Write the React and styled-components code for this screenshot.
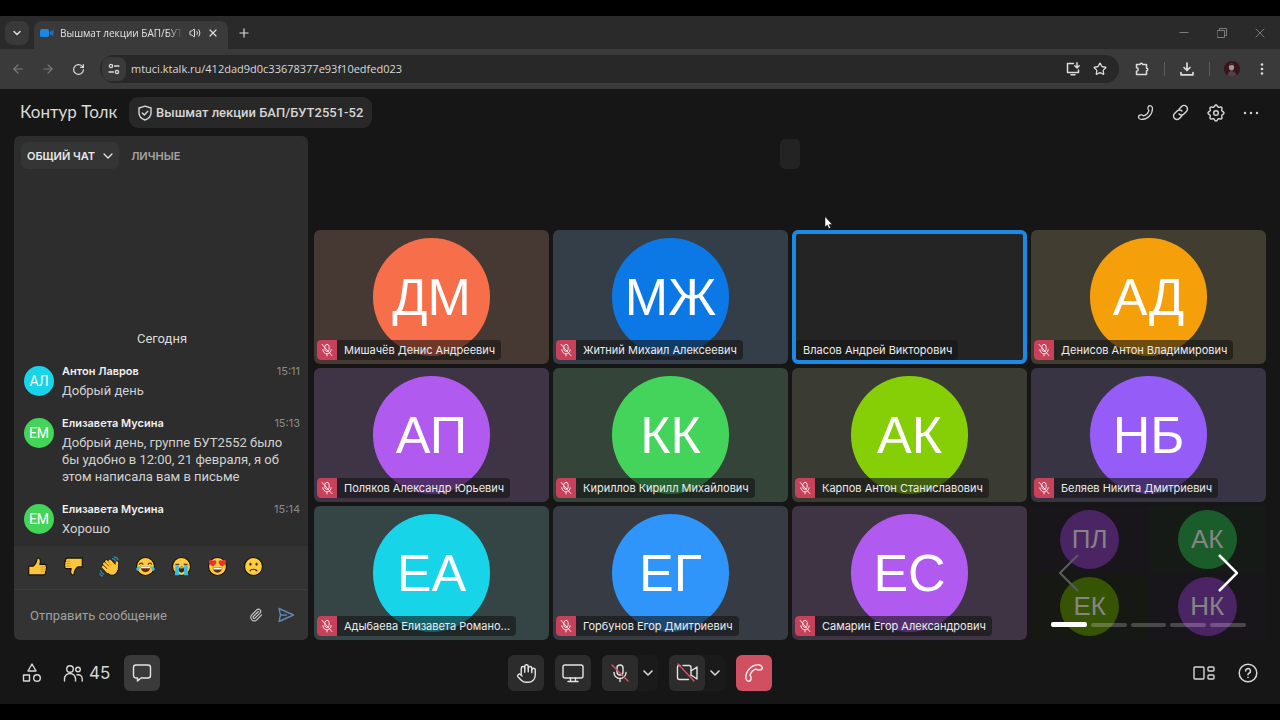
import React from 'react'
import styled, { createGlobalStyle, css } from 'styled-components'
import { Volume2, X, Plus, ChevronDown, ArrowLeft, ArrowRight, RotateCw, Star, Paperclip, Hand } from 'lucide-react'

// Data
const people = [
  { initials: 'ДМ', name: 'Мишачёв Денис Андреевич', color: '#f76f4a', bg: '#463832' },
  { initials: 'МЖ', name: 'Житний Михаил Алексеевич', color: '#0b78e6', bg: '#343e48' },
  { name: 'Власов Андрей Викторович', bg: '#242424', speaking: true },
  { initials: 'АД', name: 'Денисов Антон Владимирович', color: '#f59f0b', bg: '#413e31' },
  { initials: 'АП', name: 'Поляков Александр Юрьевич', color: '#b15af0', bg: '#3e3446' },
  { initials: 'КК', name: 'Кириллов Кирилл Михайлович', color: '#44d45c', bg: '#344438' },
  { initials: 'АК', name: 'Карпов Антон Станиславович', color: '#86cf06', bg: '#3a3b33' },
  { initials: 'НБ', name: 'Беляев Никита Дмитриевич', color: '#955cf8', bg: '#383444' },
  { initials: 'ЕА', name: 'Адыбаева Елизавета Романо...', color: '#17d4e8', bg: '#354444' },
  { initials: 'ЕГ', name: 'Горбунов Егор Дмитриевич', color: '#2f95fa', bg: '#363b44' },
  { initials: 'ЕС', name: 'Самарин Егор Александрович', color: '#b15af0', bg: '#3e3444' }
]

const nextPeople = [
  { initials: 'ПЛ', color: '#4b2464', bg: '#18151b' },
  { initials: 'АК', color: '#1b5c2b', bg: '#151a16' },
  { initials: 'ЕК', color: '#375404', bg: '#161814' },
  { initials: 'НК', color: '#4b2464', bg: '#18151b' }
]

const messages = [
  { initials: 'АЛ', color: '#17d4e8', author: 'Антон Лавров', time: '15:11', lines: ['Добрый день'] },
  {
    initials: 'ЕМ', color: '#42d55a', author: 'Елизавета Мусина', time: '15:13',
    lines: ['Добрый день, группе БУТ2552 было', 'бы удобно в 12:00, 21 февраля, я об', 'этом написала вам в письме']
  },
  { initials: 'ЕМ', color: '#42d55a', author: 'Елизавета Мусина', time: '15:14', lines: ['Хорошо'] }
]

// Styles
const GlobalStyle = createGlobalStyle`
  * { box-sizing: border-box; }
  body {
    margin: 0;
    background: #000;
    color: #e6e6e6;
    font-family: Inter, "Liberation Sans", sans-serif;
  }
  button, input { font-family: inherit; color: inherit; }
  button { margin: 0; padding: 0; border: 0; background: none; }
  svg { display: block; flex: none; }
`

const Page = styled.div`
  display: flex;
  flex-direction: column;
  min-height: 100vh;
  padding: 16px 0;
`

const TabStrip = styled.div`
  display: flex;
  align-items: flex-end;
  height: 33px;
  padding-left: 4px;
  background: #2a2a2a;
`

const ChromeButton = styled.button`
  display: flex;
  flex: none;
  align-items: center;
  justify-content: center;
  width: ${p => p.$w || 24}px;
  height: 24px;
  border-radius: 8px;
  background: ${p => p.$bg || 'transparent'};
  color: ${p => p.$color || '#dcdcdc'};
`

const TabSearch = styled.div`
  padding: 0 5px 4px 1px;
`

const Tab = styled.div`
  display: flex;
  align-items: center;
  width: 194px;
  height: 28px;
  padding: 0 3px 4px 6px;
  border-radius: 8px 8px 0 0;
  background: #3a3a3a;
`

const TabTitle = styled.span`
  flex: 1;
  min-width: 0;
  margin: 0 6px;
  white-space: nowrap;
  font: 10px/16px "Open Sans", sans-serif;
  color: #e4e4e4;
  mask-image: linear-gradient(90deg, #000 88%, transparent);
`

const NewTab = styled.div`
  padding: 0 0 4px 4px;
`

const WindowControls = styled.div`
  display: flex;
  align-self: center;
  gap: 14px;
  margin-left: auto;
  padding-right: 8px;
`

const AddressBar = styled.div`
  display: flex;
  align-items: center;
  height: 40px;
  padding: 0 10px 0 6px;
  background: #3a3a3a;
`

const NavButtons = styled.div`
  display: flex;
  gap: 6px;
  padding-right: 10px;
`

const UrlBox = styled.div`
  display: flex;
  flex: 1;
  align-items: center;
  height: 28px;
  padding: 0 6px 0 2px;
  border-radius: 14px;
  background: #282828;
`

const UrlInput = styled.input`
  flex: 1;
  min-width: 0;
  margin-left: 3px;
  border: 0;
  outline: 0;
  background: none;
  color: #d8d8d8;
  font: 11px/20px "Open Sans", sans-serif;
`

const Tools = styled.div`
  display: flex;
  align-items: center;
  gap: 10px;
  padding-left: 11px;
`

const Divider = styled.span`
  width: 1px;
  height: 14px;
  background: #5c5c5c;
`

const AppBody = styled.div`
  display: flex;
  flex: 1;
  flex-direction: column;
  background: #161616;
`

const Header = styled.header`
  display: flex;
  align-items: center;
  height: 47px;
  padding: 0 12px 0 20px;
`

const Logo = styled.div`
  width: 109px;
  padding-bottom: 2px;
  color: #dadada;
  font-family: Lato, sans-serif;
  font-size: 17px;
  line-height: 24px;
`

const RoomName = styled.button`
  display: flex;
  align-items: center;
  gap: 3px;
  height: 31px;
  padding: 0 9px 0 8px;
  border-radius: 9px;
  background: #282828;
  color: #d6d6d6;
  font-family: Roboto, sans-serif;
  font-size: 13px;
  font-weight: 500;
`

const HeaderActions = styled.div`
  display: flex;
  margin-left: auto;
`

const HeaderButton = styled.button`
  display: flex;
  align-items: center;
  justify-content: center;
  width: 35px;
  height: 32px;
  color: #d4d4d4;
`

const Main = styled.main`
  display: grid;
  flex: 1;
  grid-template-columns: 294px 1fr;
  gap: 6px;
  padding: 0 14px;
`

const Chat = styled.section`
  display: flex;
  flex-direction: column;
  overflow: hidden;
  border-radius: 6px;
  background: #2d2d2d;
`

const ChatTabs = styled.div`
  display: flex;
  gap: 6px;
  padding: 6px 7px;
`

const ChatTab = styled.button`
  display: flex;
  align-items: center;
  gap: 8px;
  height: 27px;
  padding: 0 6px;
  border-radius: 7px;
  color: #a4a4a4;
  font-size: 11px;
  font-weight: 600;
  ${p => p.$active && css`
    background: #353535;
    color: #e8e8e8;
  `}
`

const MessageList = styled.div`
  display: flex;
  flex: 1;
  flex-direction: column;
  justify-content: flex-end;
  gap: 15px;
  padding: 0 8px 9px 10px;
`

const DayLabel = styled.div`
  color: #dcdcdc;
  font-family: Roboto, sans-serif;
  font-size: 13px;
  line-height: 17px;
  text-align: center;
`

const Message = styled.article`
  display: grid;
  grid-template-columns: 30px 1fr;
  gap: 8px;
`

const MessageHead = styled.div`
  display: flex;
  justify-content: space-between;
  margin-bottom: 2px;
  font-size: 11px;
  line-height: 18px;
`

const Author = styled.span`
  color: #f0f0f0;
  font-weight: 600;
`

const Time = styled.time`
  color: #8c8c8c;
`

const MessageLine = styled.div`
  color: #d2d2d2;
  font-family: Roboto, sans-serif;
  font-size: 13px;
  line-height: 17px;
  white-space: nowrap;
`

const SmallAvatar = styled.div`
  display: flex;
  align-items: center;
  justify-content: center;
  width: 30px;
  height: 30px;
  margin-top: 4px;
  border-radius: 50%;
  background: ${p => p.$color};
  color: #fff;
  font-family: Roboto, sans-serif;
  font-size: 14px;
`

const Emojis = styled.div`
  display: flex;
  gap: 12px;
  height: 44px;
  padding: 0 12px 2px 11px;
  border-bottom: 1px solid #3c3c3c;
  background: #333;
`

const EmojiButton = styled.button`
  display: flex;
  align-items: center;
  justify-content: center;
  width: 24px;
`

const Composer = styled.form`
  display: flex;
  align-items: center;
  gap: 10px;
  height: 50px;
  padding: 0 12px 0 16px;
  background: #333;
`

const MessageInput = styled.input`
  flex: 1;
  min-width: 0;
  padding: 0;
  border: 0;
  outline: 0;
  background: none;
  font-family: Roboto, sans-serif;
  font-size: 13px;
  &::placeholder { color: #a0a0a0; opacity: 1; }
`

const PlainButton = styled.button`
  display: flex;
  align-items: center;
  justify-content: center;
  width: 20px;
  height: 24px;
  color: ${p => p.$color || '#c8c8c8'};
`

const Stage = styled.section`
  position: relative;
  display: flex;
  flex-direction: column;
  justify-content: flex-end;
`

const StageHandle = styled.div`
  width: 20px;
  height: 30px;
  margin: 3px auto auto;
  border-radius: 5px;
  background: #232323;
`

const Cursor = styled.svg`
  position: absolute;
  top: 80px;
  left: 510px;
`

const Tiles = styled.div`
  display: grid;
  grid-template-columns: repeat(4, 1fr);
  gap: 4px;
`

const Tile = styled.div`
  position: relative;
  display: flex;
  align-items: center;
  justify-content: center;
  aspect-ratio: 235 / 134;
  overflow: hidden;
  border: ${p => (p.$speaking ? '4px solid #1b8ae6' : '0')};
  border-radius: 6px;
  background: ${p => p.$bg};
`

const Avatar = styled.div`
  display: flex;
  align-items: center;
  justify-content: center;
  height: 88%;
  aspect-ratio: 1;
  border-radius: 50%;
  background: ${p => p.$color};
  color: ${p => (p.$small ? '#858585' : '#fff')};
  font-family: "Liberation Sans", sans-serif;
  font-size: ${p => (p.$small ? 26 : 52)}px;
`

const NameTag = styled.div`
  position: absolute;
  bottom: ${p => (p.$speaking ? 0 : 4)}px;
  left: ${p => (p.$speaking ? 0 : 3)}px;
  display: flex;
  overflow: hidden;
  height: 20px;
  border-radius: 4px;
  background: rgba(20, 20, 20, 0.6);
  color: #ececec;
  font-size: 11px;
  line-height: 20px;
  white-space: nowrap;
`

const Muted = styled.span`
  display: flex;
  align-items: center;
  justify-content: center;
  width: 20px;
  background: #c8415a;
`

const Name = styled.span`
  padding: 0 6px 0 7px;
`

const NextPage = styled.div`
  position: relative;
  display: grid;
  grid-template-columns: 1fr 1fr;
  grid-template-rows: 1fr 1fr;
`

const MiniTile = styled.div`
  display: flex;
  align-items: center;
  justify-content: center;
  min-height: 0;
  background: ${p => p.$bg};
`

const Pager = styled.div`
  position: absolute;
  inset: 0;
  display: flex;
  align-items: center;
  justify-content: space-between;
  padding: 0 28px;
`

const PageBars = styled.div`
  position: absolute;
  right: 20px;
  bottom: 13px;
  left: 20px;
  display: flex;
  align-items: center;
  gap: 4px;
`

const PageBar = styled.span`
  flex: 1;
  height: ${p => (p.$active ? 5 : 4)}px;
  border-radius: 2px;
  background: ${p => (p.$active ? '#fff' : 'rgba(255, 255, 255, 0.22)')};
`

const Footer = styled.footer`
  display: grid;
  grid-template-columns: 1fr auto 1fr;
  padding: 15px 16px 13px;
`

const FooterGroup = styled.div`
  display: flex;
  align-items: center;
  justify-content: ${p => p.$align || 'flex-start'};
  gap: ${p => p.$gap}px;
`

const FooterButton = styled.button`
  display: flex;
  align-items: center;
  justify-content: center;
  gap: 6px;
  min-width: 32px;
  height: 36px;
  color: #d8d8d8;
  font-size: 17px;
`

const CallButton = styled.button`
  display: flex;
  align-items: center;
  justify-content: center;
  width: 36px;
  height: 36px;
  border-radius: 6px;
  background: ${p => p.$bg || '#2c2c2c'};
  color: #e4e4e4;
`

const SplitButton = styled.div`
  display: flex;
  border-radius: 6px;
  background: #1a1a1a;
`

const MoreButton = styled.button`
  display: flex;
  align-items: center;
  justify-content: center;
  width: 20px;
  color: #d8d8d8;
`

// Icons
const Icon = ({ size = 20, box = 20, w = 1.4, children, ...props }) => (
  <svg width={size} height={size} viewBox={`0 0 ${box} ${box}`} fill="none" stroke="currentColor" strokeWidth={w} strokeLinecap="round" strokeLinejoin="round" aria-hidden="true" {...props}>
    {children}
  </svg>
)

const MicPaths = () => (
  <>
    <rect x="7" y="2" width="6" height="10" rx="3" />
    <path d="M4 9.5a6 6 0 0 0 12 0M10 15.500v3" />
  </>
)

const Handset = ({ up, size = 20 }) => (
  <Icon size={size} w={1.5}>
    <g transform={up ? 'rotate(180 10 10)' : undefined}>
      <path d="M1.800 14.500C2 7.500 7.500 2 14.500 1.800c1.500-.1 3.600 1.200 3.700 2.700.1 1.600-1.300 2.500-2.800 2.600-1.300.1-2.300-.2-3.100-1.100C9.500 6.800 6.800 9.500 6 12.300c.9.800 1.200 1.800 1.100 3.100-.1 1.500-1 2.900-2.600 2.800-1.500-.1-2.800-2.200-2.700-3.700Z" />
    </g>
  </Icon>
)

const Camera = () => (
  <svg width="14" height="10" viewBox="0 0 14 10" aria-hidden="true">
    <rect y="1" width="9" height="8" rx="1.500" fill="#1a87e0" />
    <path d="M9.800 4 13.500 1.500v7L9.800 6z" fill="#1a6fc0" />
  </svg>
)

const face = <circle cx="12" cy="12" r="10.300" fill="#fccb3f" stroke="#15120a" strokeWidth="1.300" />
const thumb = (
  <g stroke="#15120a" strokeWidth="1.300" strokeLinejoin="round" fill="#fcc53a">
    <path d="M2 11.500h5.200c2.300-1.800 4-4.800 4.300-9C13.800 1.600 15.300 3.500 15.300 6c0 1.400-.3 2.600-.7 3.500h5.200c2 0 2.500 1.300 2 2.600.9.700.8 2.100 0 2.800.6.900.3 2.200-.6 2.700.3 1.500-.5 4-2.400 4H2Z" />
    <path d="M15.500 12.500h5M15.500 15.200h5M15.500 18h4.500" stroke="#c98716" strokeWidth=".8" fill="none" />
  </g>
)

const waveHand = 'M4.500 12.500 10 18M6 8.800l7 6.700M8.500 6.200l7.500 7M12.500 5.500l5 5.500M20.500 7.500 20 15'
const wave = (
  <g strokeLinejoin="round" strokeLinecap="round" fill="none">
    <path d={waveHand} stroke="#15120a" strokeWidth="4.400" />
    <circle cx="15" cy="15.500" r="6.500" fill="#fcc53a" stroke="#15120a" strokeWidth="1.200" />
    <path d={waveHand} stroke="#fcc53a" strokeWidth="3" />
    <path d="m6.500 11.500 4 4M8.500 9l4 3.800M11 7.200l3.500 3.500" stroke="#c98716" strokeWidth=".6" />
    <path d="M15.500 3c1.800.2 3 1.200 3.500 2.800M17.500.9c2.200.3 3.700 1.600 4.200 3.500M1.900 17c.4 2 1.600 3.300 3.500 3.900M1.100 20.500c.6 1.200 1.500 2 2.900 2.500" stroke="#2c93b8" strokeWidth="1.400" />
  </g>
)

const emojis = [
  { label: 'Нравится', art: thumb },
  { label: 'Не нравится', art: <g transform="rotate(180 12 12)">{thumb}</g> },
  { label: 'Привет', art: wave },
  {
    label: 'Смешно',
    art: (
      <>
        {face}
        <path d="M5 9.500c.8-1.800 3-1.800 4 0M15 9.500c.8-1.800 3-1.800 4 0" fill="none" stroke="#5b3608" strokeWidth="1.300" strokeLinecap="round" />
        <path d="M6.500 12h11c0 4-2.500 6.500-5.500 6.500S6.500 16 6.500 12Z" fill="#6b2a12" />
        <path d="M7 12h10v2H7Z" fill="#fff" />
        <path d="M5.500 11.500C2.500 12 1 13.500 1.500 16c1 2 4.300 1 4-4.500ZM18.500 11.500c3 .5 4.500 2 4 4.500-1 2-4.300 1-4-4.500Z" fill="#2fc0f2" />
      </>
    )
  },
  {
    label: 'Плачу',
    art: (
      <>
        {face}
        <path d="M5 9.500h4.500M14.500 9.500H19" stroke="#5b3608" strokeWidth="1.300" />
        <path d="M5 10.500h4V22H4.500ZM15 10.500h4l.5 11.500H15Z" fill="#2fc0f2" />
        <ellipse cx="12" cy="15.500" rx="3" ry="3.500" fill="#4a1c0c" />
        <path d="M9.800 13.500h4.400" stroke="#fff" />
      </>
    )
  },
  {
    label: 'Восторг',
    art: (
      <>
        {face}
        <path d="M6.500 12C3 10 1.500 7.500 2.500 5.500s3.500-1.500 4.200 0c1.300-1.300 3.700-1 4 1 .4 2-1.500 4-4.200 5.500ZM17.500 12c3.500-2 5-4.500 4-6.500s-3.500-1.500-4.200 0c-1.300-1.300-3.700-1-4 1-.4 2 1.500 4 4.200 5.500Z" fill="#e8352c" />
        <path d="M6.500 13.500h11c-.3 3.500-2.500 5.500-5.500 5.500s-5.200-2-5.500-5.500Z" fill="#6b2a12" />
        <path d="M7.200 13.700h9.600v1.800H7.200Z" fill="#fff" />
      </>
    )
  },
  {
    label: 'Грустно',
    art: (
      <>
        {face}
        <ellipse cx="8.500" cy="9.500" rx="1.200" ry="1.700" fill="#4a2c08" />
        <ellipse cx="15.500" cy="9.500" rx="1.200" ry="1.700" fill="#4a2c08" />
        <path d="M8 17c1.600-2.400 6.400-2.400 8 0" fill="none" stroke="#4a2c08" strokeWidth="1.300" strokeLinecap="round" />
      </>
    )
  }
]

const gear = Array.from({ length: 65 }, (_, i) => {
  const a = (i / 64) * Math.PI * 2
  const r = 7.9 + Math.cos(a * 8)
  return `${i ? 'L' : 'M'}${(10 + r * Math.cos(a)).toFixed(2)} ${(10 + r * Math.sin(a)).toFixed(2)}`
}).join('')

// Components
const Browser = () => (
  <>
    <TabStrip>
      <TabSearch>
        <ChromeButton $bg="#393939" aria-label="Поиск вкладок"><ChevronDown size={12} strokeWidth={3} /></ChromeButton>
      </TabSearch>
      <Tab>
        <Camera />
        <TabTitle>Вышмат лекции БАП/БУТ2</TabTitle>
        <Volume2 size={12} />
        <ChromeButton aria-label="Закрыть вкладку"><X size={12} strokeWidth={2.5} /></ChromeButton>
      </Tab>
      <NewTab>
        <ChromeButton aria-label="Новая вкладка"><Plus size={14} /></ChromeButton>
      </NewTab>
      <WindowControls>
        <ChromeButton $color="#7c7c7c" aria-label="Свернуть"><Icon size={10} box={10} w={1}><path d="M1 4.500h8" /></Icon></ChromeButton>
        <ChromeButton $color="#7c7c7c" aria-label="Развернуть">
          <Icon size={10} box={10} w={1}><path d="M.5 2.500h7v7h-7zM2.500 2.500v-2h7v7h-2" /></Icon>
        </ChromeButton>
        <ChromeButton $color="#7c7c7c" aria-label="Закрыть"><Icon size={10} box={10} w={1}><path d="m1 1 8 8M9 1 1 9" /></Icon></ChromeButton>
      </WindowControls>
    </TabStrip>
    <AddressBar>
      <NavButtons>
        <ChromeButton $color="#7c7c7c" aria-label="Назад"><ArrowLeft size={14} /></ChromeButton>
        <ChromeButton $color="#7c7c7c" aria-label="Вперёд"><ArrowRight size={14} /></ChromeButton>
        <ChromeButton aria-label="Обновить"><RotateCw size={13} strokeWidth={2.2} /></ChromeButton>
      </NavButtons>
      <UrlBox>
        <ChromeButton $bg="#3a3a3a" aria-label="Сведения о сайте">
          <Icon size={12} box={12} w={1.3}>
            <circle cx="3" cy="3" r="1.600" /><path d="M6.500 3H11M1 9h4.500" /><circle cx="9" cy="9" r="1.600" />
          </Icon>
        </ChromeButton>
        <UrlInput aria-label="Адрес" defaultValue="mtuci.ktalk.ru/412dad9d0c33678377e93f10edfed023" />
        <ChromeButton $w={27} aria-label="Установить">
          <Icon size={14} box={14} w={1.5}>
            <path d="M7.500 1.500h-6v9h11V8M5 12.800h4M11 .8v5M8.800 3.800 11 6l2.200-2.200" />
          </Icon>
        </ChromeButton>
        <ChromeButton $w={27} aria-label="В закладки"><Star size={14} strokeWidth={2.2} /></ChromeButton>
      </UrlBox>
      <Tools>
        <ChromeButton aria-label="Расширения">
          <Icon size={14} box={14} w={1.5}><path d="M1.500 2.500H5a1.300 1.300 0 0 1 2.600 0h3.900v3.700a1.300 1.300 0 0 1 0 2.600v3.700h-10V9.200a1.700 1.700 0 0 0 0-3.400Z" /></Icon>
        </ChromeButton>
        <Divider />
        <ChromeButton aria-label="Загрузки">
          <Icon size={14} box={14} w={1.700}><path d="M7 1v7M4 5.500l3 3 3-3M1 10.500v2.300h12v-2.300" /></Icon>
        </ChromeButton>
        <Divider />
        <ChromeButton aria-label="Профиль">
          <svg width="16" height="16" viewBox="0 0 16 16" aria-hidden="true">
            <circle cx="8" cy="8" r="8" fill="#34161c" />
            <path d="M3.500 14.500c0-3 2-4.500 4-4.500s4.500 1.500 5 4.200A8 8 0 0 1 3.500 14.500Z" fill="#4c4444" />
            <ellipse cx="7.500" cy="6" rx="2.600" ry="3.500" fill="#b08f86" />
            <path d="M4.800 5c0-3.500 5.500-3.500 5.500 0-1-1.500-4-1.500-5.500 0Z" fill="#2b1b1b" />
          </svg>
        </ChromeButton>
        <ChromeButton $w={16} aria-label="Меню">
          <Icon size={14} box={14} w={0}><g fill="currentColor"><circle cx="7" cy="2.500" r="1.300" /><circle cx="7" cy="7" r="1.300" /><circle cx="7" cy="11.500" r="1.300" /></g></Icon>
        </ChromeButton>
      </Tools>
    </AddressBar>
  </>
)

const ChatPanel = () => (
  <Chat>
    <ChatTabs>
      <ChatTab $active>ОБЩИЙ ЧАТ <Icon size={10} box={10} w={1.200}><path d="m1 3 4 4 4-4" /></Icon></ChatTab>
      <ChatTab>ЛИЧНЫЕ</ChatTab>
    </ChatTabs>
    <MessageList>
      <DayLabel>Сегодня</DayLabel>
      {messages.map(m => (
        <Message key={m.time}>
          <SmallAvatar $color={m.color}>{m.initials}</SmallAvatar>
          <div>
            <MessageHead><Author>{m.author}</Author><Time>{m.time}</Time></MessageHead>
            {m.lines.map(line => <MessageLine key={line}>{line}</MessageLine>)}
          </div>
        </Message>
      ))}
    </MessageList>
    <Emojis>
      {emojis.map(e => (
        <EmojiButton key={e.label} aria-label={e.label}>
          <svg width="21" height="21" viewBox="0 0 24 24" aria-hidden="true">{e.art}</svg>
        </EmojiButton>
      ))}
    </Emojis>
    <Composer>
      <MessageInput placeholder="Отправить сообщение" aria-label="Сообщение" />
      <PlainButton type="button" aria-label="Прикрепить файл"><Paperclip size={14} /></PlainButton>
      <PlainButton type="button" $color="#5f86b0" aria-label="Отправить">
        <Icon size={18} box={18} w={1.400}><path d="M2 2.500 16.500 9 2 15.500 3.500 9ZM3.500 9h6" /></Icon>
      </PlainButton>
    </Composer>
  </Chat>
)

const SlashedMic = () => <Icon size={14}><MicPaths /><path d="m3 2 14 16" /></Icon>

const Participants = () => (
  <Tiles>
    {people.map(p => (
      <Tile key={p.name} $bg={p.bg} $speaking={p.speaking}>
        {p.initials && <Avatar $color={p.color}>{p.initials}</Avatar>}
        <NameTag $speaking={p.speaking}>
          {!p.speaking && <Muted><SlashedMic /></Muted>}
          <Name>{p.name}</Name>
        </NameTag>
      </Tile>
    ))}
    <NextPage>
      {nextPeople.map(p => (
        <MiniTile key={p.initials} $bg={p.bg}><Avatar $small $color={p.color}>{p.initials}</Avatar></MiniTile>
      ))}
      <Pager>
        <PlainButton $color="#5c5c5c" aria-label="Предыдущая страница">
          <svg width="20" height="38" viewBox="0 0 20 38" fill="none" stroke="currentColor" strokeWidth="2"><path d="M19 1 1 19l18 18" /></svg>
        </PlainButton>
        <PlainButton $color="#fff" aria-label="Следующая страница">
          <svg width="20" height="38" viewBox="0 0 20 38" fill="none" stroke="currentColor" strokeWidth="2.500"><path d="m1 1 18 18L1 37" /></svg>
        </PlainButton>
      </Pager>
      <PageBars>
        <PageBar $active /><PageBar /><PageBar /><PageBar /><PageBar />
      </PageBars>
    </NextPage>
  </Tiles>
)

const CallBar = () => (
  <Footer>
    <FooterGroup $gap={14}>
      <FooterButton aria-label="Приложения">
        <Icon><path d="m10 1 4 7H6ZM1.500 12h6v6h-6z" /><circle cx="15" cy="15" r="3.300" /></Icon>
      </FooterButton>
      <FooterButton aria-label="Участники">
        <Icon size={21} box={21}>
          <circle cx="8" cy="6" r="3.300" /><path d="M2.500 18v-2a5.500 5.500 0 0 1 11 0v2" />
          <circle cx="16" cy="6.500" r="2.300" /><path d="M15 11.800c3-.6 5.200 1.200 5.200 4V18" />
        </Icon>
        45
      </FooterButton>
      <CallButton $bg="#3a3a3a" aria-label="Чат">
        <Icon size={20}><path d="M4 2h12a2.500 2.500 0 0 1 2.500 2.500v8A2.500 2.500 0 0 1 16 15H9l-3.500 3v-3H4a2.500 2.500 0 0 1-2.500-2.500v-8A2.500 2.500 0 0 1 4 2Z" /></Icon>
      </CallButton>
    </FooterGroup>
    <FooterGroup $gap={11}>
      <CallButton aria-label="Поднять руку"><Hand size={21} strokeWidth={1.600} /></CallButton>
      <CallButton aria-label="Показать экран">
        <Icon size={22} box={22}><rect x="1" y="3" width="20" height="13" rx="2" /><path d="M8.500 16v3.500M13.500 16v3.500M6 19.500h10" /></Icon>
      </CallButton>
      <SplitButton>
        <CallButton aria-label="Включить микрофон"><Icon><MicPaths /><path d="m2 2 16 16" stroke="#d8506a" /></Icon></CallButton>
        <MoreButton aria-label="Выбрать микрофон"><Icon size={10} box={10} w={1.600}><path d="m1 3 4 4 4-4" /></Icon></MoreButton>
      </SplitButton>
      <SplitButton>
        <CallButton aria-label="Включить камеру">
          <Icon size={22} box={22}>
            <path d="M4 3.500H3A1.500 1.500 0 0 0 1.500 5v10.500A2 2 0 0 0 3.500 17.500h9M7 3.500h6a2 2 0 0 1 2 2v8M15 9l6-4v12l-6-4" />
            <path d="m2 2 16 17" stroke="#d8506a" />
          </Icon>
        </CallButton>
        <MoreButton aria-label="Выбрать камеру"><Icon size={10} box={10} w={1.600}><path d="m1 3 4 4 4-4" /></Icon></MoreButton>
      </SplitButton>
      <CallButton $bg="#d04f60" aria-label="Завершить звонок"><Handset /></CallButton>
    </FooterGroup>
    <FooterGroup $gap={12} $align="flex-end">
      <FooterButton aria-label="Раскладка">
        <Icon size={22} box={22}><rect x="1" y="5" width="10" height="12" rx="1" /><rect x="15" y="5" width="6" height="4" rx="1" /><rect x="15" y="13" width="6" height="4" rx="1" /></Icon>
      </FooterButton>
      <FooterButton aria-label="Справка">
        <Icon w={1.500}><circle cx="10" cy="10" r="8.800" /><path d="M7.600 8a2.400 2.400 0 1 1 3.400 2.200c-.7.300-1 .8-1 1.500M10 14.300v.2" /></Icon>
      </FooterButton>
    </FooterGroup>
  </Footer>
)

const App = () => (
  <Page>
    <GlobalStyle />
    <Browser />
    <AppBody>
      <Header>
        <Logo>Контур Толк</Logo>
        <RoomName>
          <Icon size={16} box={16}><path d="M8 1.200 14 3v5c0 3.500-2.500 5.700-6 7-3.500-1.300-6-3.500-6-7V3ZM5.300 8l2 2 3.500-3.700" /></Icon>
          Вышмат лекции БАП/БУТ2551-52
        </RoomName>
        <HeaderActions>
          <HeaderButton aria-label="Позвонить"><Handset up size={17} /></HeaderButton>
          <HeaderButton aria-label="Скопировать ссылку">
            <Icon size={17} w={1.700}><path d="M8.300 11.700a4 4 0 0 0 5.700 0l3-3a4 4 0 0 0-5.700-5.700L8.500 5.800M11.700 8.300a4 4 0 0 0-5.700 0l-3 3A4 4 0 0 0 8.700 17l2.800-2.800" /></Icon>
          </HeaderButton>
          <HeaderButton aria-label="Настройки"><Icon size={18} w={1.600}><path d={gear} /><circle cx="10" cy="10" r="2.600" /></Icon></HeaderButton>
          <HeaderButton aria-label="Ещё">
            <Icon size={16} box={16} w={0}><g fill="currentColor"><circle cx="2" cy="8" r="1.200" /><circle cx="8" cy="8" r="1.200" /><circle cx="14" cy="8" r="1.200" /></g></Icon>
          </HeaderButton>
        </HeaderActions>
      </Header>
      <Main>
        <ChatPanel />
        <Stage>
          <StageHandle />
          <Participants />
          <Cursor width="9" height="13" viewBox="0 0 9 13" aria-hidden="true"><path d="M1 .5v10.500l2.300-2 1.600 3.600 1.700-.8L5 8.400h3.200Z" fill="#fff" stroke="#111" strokeWidth=".5" /></Cursor>
        </Stage>
      </Main>
      <CallBar />
    </AppBody>
  </Page>
)

export default App
